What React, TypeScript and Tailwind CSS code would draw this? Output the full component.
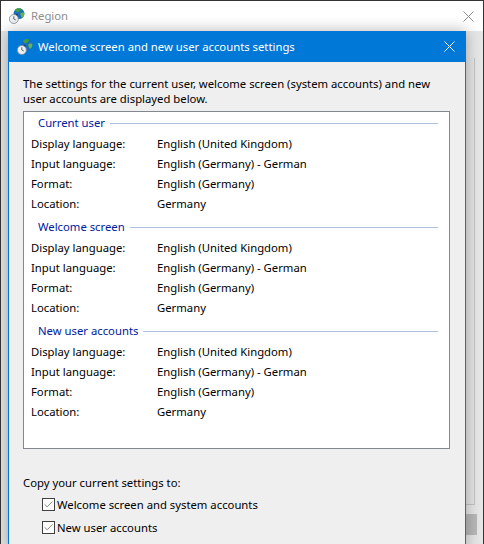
import { Check } from "lucide-react";

const sections = ["Current user", "Welcome screen", "New user accounts"];

const rows = [
  ["Display language:", "English (United Kingdom)"],
  ["Input language:", "English (Germany) - German"],
  ["Format:", "English (Germany)"],
  ["Location:", "Germany"],
];

function GlobeIcon({ className }: { className?: string }) {
  return (
    <svg width={16} height={16} viewBox="0 0 16 16" className={className}>
      <circle cx="10" cy="5.600" r="5.400" fill="#1c6cc0" />
      <path d="M6 1.700C7.500.3 10 0 12 .6c.8 1-.8 1.700-1.400 2.700-.7 1.300-2.400 1.300-3 .6-.5-.6-1.400-1.200-1.600-2.200z" fill="#3f9f3c" />
      <path d="M11.500 5c1.200-.6 2.800-.7 3.800-.1.400 1.900-.6 3.900-2.300 5-.9-.8-2-3.200-1.500-4.900z" fill="#63b84a" />
      <path d="M6 6c1-.4 2.400-.2 3 .6l-1 1.500z" fill="#0d3f86" />
      <circle cx="4.800" cy="11" r="4.500" fill="#eef1f3" stroke="#7f8890" strokeWidth="0.8" />
      <path d="M4.800 8.200V11l2 1" fill="none" stroke="#3f454c" strokeWidth="0.8" />
    </svg>
  );
}

function CloseIcon({ className }: { className?: string }) {
  return (
    <svg width={11} height={11} viewBox="0 0 11 11" className={className}>
      <path d="M0.500 0.500L10.500 10.500M10.500 0.500L0.500 10.500" stroke="currentColor" strokeWidth="1" fill="none" />
    </svg>
  );
}

function CheckRow({ label }: { label: string }) {
  return (
    <div className="flex h-[23px] items-center pl-[19px]">
      <span className="flex h-[13px] w-[13px] items-center justify-center border border-[#404040] bg-white">
        <Check size={11} strokeWidth={1.5} className="text-[#505050]" />
      </span>
      <span className="ml-[2px] text-black">{label}</span>
    </div>
  );
}

export default function App() {
  return (
    <div
      className="relative h-[544px] w-[484px] overflow-hidden border-x border-t border-[#333333] bg-[#e6e6e6] text-[11.3px] leading-[16px]"
      style={{ fontFamily: '"Noto Sans", sans-serif' }}
    >
      {/* window behind */}
      <div className="flex h-[30px] items-center bg-white pl-[8px]">
        <GlobeIcon className="shrink-0" />
        <span className="ml-[6px] text-[#8f8f8f]">Region</span>
        <CloseIcon className="ml-auto mr-[9px] text-[#8c8c8c]" />
      </div>
      <div className="ml-[465px] mt-[27px] h-[447px] w-[9px] border-r border-b border-[#c4c4c4] bg-[#e4e4e4]" />
      <div className="ml-[465px] mt-[9px] h-[21px] w-[11px] bg-[#b8b8b8]" />

      {/* dialog on top */}
      <div className="absolute left-[7px] top-[30px] h-[520px] w-[458px] border-x border-[#0078d7] bg-[#efefef] shadow-[0_0_14px_rgba(0,0,0,0.3)]">
        <div className="flex h-[31px] items-center bg-[#0078d7] pl-[8px] text-white">
          <GlobeIcon className="shrink-0" />
          <span className="ml-[5px]">Welcome screen and new user accounts settings</span>
          <CloseIcon className="ml-auto mr-[10px]" />
        </div>
        <div className="pl-[14px] pt-[14px] text-black">
          <p className="w-[420px] leading-[15px]">
            The settings for the current user, welcome screen (system accounts) and new
            <br />
            user accounts are displayed below.
          </p>
          <div className="mt-[5px] flex h-[338px] w-[427px] flex-col gap-[5px] border border-[#828790] bg-white pt-[3px]">
            {sections.map((title) => (
              <div key={title}>
                <div className="flex h-[16px] items-center pl-[14px] pr-[11px]">
                  <span className="text-[#00209f]">{title}</span>
                  <div className="ml-[5px] h-px flex-1 bg-[#b0c0e0]" />
                </div>
                <div className="mt-[3px] pl-[7px]">
                  {rows.map(([label, value]) => (
                    <div key={label} className="flex h-[20px] items-center">
                      <span className="w-[126px]">{label}</span>
                      <span>{value}</span>
                    </div>
                  ))}
                </div>
              </div>
            ))}
          </div>
          <p className="mt-[26px]">Copy your current settings to:</p>
          <div className="mt-[2px]">
            <CheckRow label="Welcome screen and system accounts" />
            <CheckRow label="New user accounts" />
          </div>
        </div>
      </div>
    </div>
  );
}
